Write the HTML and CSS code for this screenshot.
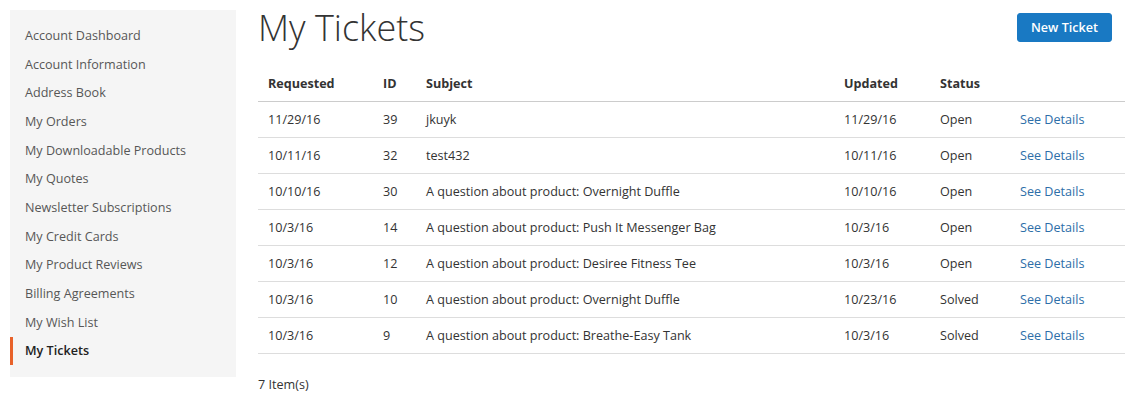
FILE: index.html
```html
<!DOCTYPE html>
<html>
<head>
<meta charset="utf-8">
<link rel="stylesheet" href="styles.css">
</head>
<body>
<div class="page">
  <aside class="sidebar">
    <ul class="nav">
      <li><a>Account Dashboard</a></li>
      <li><a>Account Information</a></li>
      <li><a>Address Book</a></li>
      <li><a>My Orders</a></li>
      <li><a>My Downloadable Products</a></li>
      <li><a>My Quotes</a></li>
      <li><a>Newsletter Subscriptions</a></li>
      <li><a>My Credit Cards</a></li>
      <li><a>My Product Reviews</a></li>
      <li><a>Billing Agreements</a></li>
      <li><a>My Wish List</a></li>
      <li class="current"><a>My Tickets</a></li>
    </ul>
  </aside>
  <main class="main">
    <div class="head">
      <h1 class="title">My Tickets</h1>
      <button class="btn">New Ticket</button>
    </div>
    <table class="tickets">
      <colgroup>
        <col class="c-req"><col class="c-id"><col class="c-sub"><col class="c-upd"><col class="c-st"><col class="c-act">
      </colgroup>
      <thead>
        <tr><th>Requested</th><th>ID</th><th>Subject</th><th>Updated</th><th>Status</th><th></th></tr>
      </thead>
      <tbody>
        <tr><td>11/29/16</td><td>39</td><td>jkuyk</td><td>11/29/16</td><td>Open</td><td><a class="link">See Details</a></td></tr>
        <tr><td>10/11/16</td><td>32</td><td>test432</td><td>10/11/16</td><td>Open</td><td><a class="link">See Details</a></td></tr>
        <tr><td>10/10/16</td><td>30</td><td>A question about product: Overnight Duffle</td><td>10/10/16</td><td>Open</td><td><a class="link">See Details</a></td></tr>
        <tr><td>10/3/16</td><td>14</td><td>A question about product: Push It Messenger Bag</td><td>10/3/16</td><td>Open</td><td><a class="link">See Details</a></td></tr>
        <tr><td>10/3/16</td><td>12</td><td>A question about product: Desiree Fitness Tee</td><td>10/3/16</td><td>Open</td><td><a class="link">See Details</a></td></tr>
        <tr><td>10/3/16</td><td>10</td><td>A question about product: Overnight Duffle</td><td>10/23/16</td><td>Solved</td><td><a class="link">See Details</a></td></tr>
        <tr><td>10/3/16</td><td>9</td><td>A question about product: Breathe-Easy Tank</td><td>10/3/16</td><td>Solved</td><td><a class="link">See Details</a></td></tr>
      </tbody>
    </table>
    <p class="count">7 Item(s)</p>
  </main>
</div>
</body>
</html>
```
FILE: styles.css
```css
* { box-sizing: border-box; }
html, body { margin: 0; padding: 0; background: #fff; }
body {
  font-family: "Open Sans", "Liberation Sans", sans-serif;
  font-size: 12.6px;
  color: #333;
}
.page {
  display: flex;
  align-items: flex-start;
  padding: 10px 10px 0 10px;
  gap: 22px;
}
.sidebar {
  width: 226px;
  flex: none;
  background: #f5f5f5;
  padding: 11px 0 12px;
}
.nav { list-style: none; margin: 0; padding: 0; }
.nav li {
  height: 28.7px;
  display: flex;
  align-items: center;
  padding-left: 12px;
  border-left: 3px solid transparent;
  color: #575757;
}
.nav li.current {
  border-left-color: #e8622a;
  color: #222;
  font-weight: 600;
}
.main { flex: 1; min-width: 0; }
.head {
  display: flex;
  justify-content: space-between;
  align-items: flex-start;
}
.title {
  margin: -2px 0 0 0;
  font-size: 36px;
  font-weight: 300;
  line-height: 40px;
  color: #333;
}
.btn {
  margin: 3px 13px 0 0;
  background: #1979c3;
  color: #fff;
  border: 1px solid #1979c3;
  border-radius: 3px;
  font-family: inherit;
  font-size: 12.6px;
  font-weight: 600;
  padding: 0;
  white-space: nowrap;
  width: 95px;
  height: 29px;
}
.tickets {
  width: 100%;
  border-collapse: collapse;
  table-layout: fixed;
  margin-top: 17px;
}
.c-req { width: 115px; }
.c-id { width: 43px; }
.c-sub { width: 418px; }
.c-upd { width: 96px; }
.c-st { width: 80px; }
.c-act { width: 115px; }
.tickets th {
  text-align: left;
  font-weight: 700;
  height: 36px;
  padding: 2px 10px 0;
  border-bottom: 1px solid #ccc;
  color: #333;
}
.tickets td {
  height: 36px;
  padding: 0 10px;
  border-bottom: 1px solid #ddd;
  color: #333;
}
.link { color: #2d6ea8; }
.count {
  margin: 22px 0 0 0;
}
```
